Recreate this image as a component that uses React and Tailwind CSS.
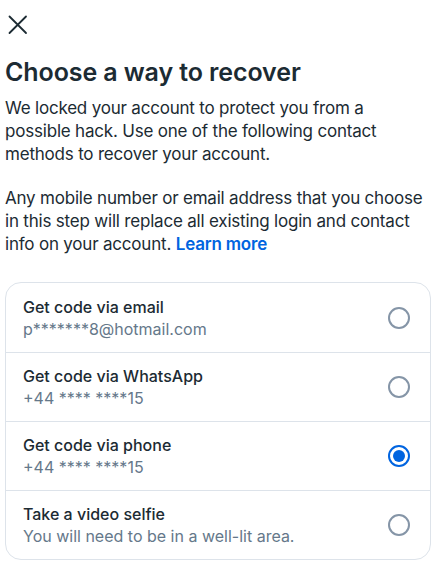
const options = [
  { title: 'Get code via email', sub: 'p*******8@hotmail.com', checked: false },
  { title: 'Get code via WhatsApp', sub: '+44 **** ****15', checked: false },
  { title: 'Get code via phone', sub: '+44 **** ****15', checked: true },
  { title: 'Take a video selfie', sub: 'You will need to be in a well-lit area.', checked: false },
]

const Radio = ({ checked }) => {
  if (checked) {
    return (
      <div className="w-[22px] h-[22px] rounded-full border-2 border-[#0064e0] flex items-center justify-center">
        <div className="w-[12px] h-[12px] rounded-full bg-[#0064e0]"></div>
      </div>
    )
  }
  return <div className="w-[22px] h-[22px] rounded-full border-2 border-[#8595a7]"></div>
}

export default function App() {
  return (
    <div className="w-[437px] h-[575px] bg-white text-[#1c2b33] font-['Inter',sans-serif] px-[5px]">
      <div className="pt-[15px] pl-[3px] h-[50px]">
        <svg width="20" height="20" viewBox="0 0 20 20" fill="none" stroke="#1c2b33" strokeWidth="1.8" strokeLinecap="round">
          <path d="M1.5 1.5 L18 18 M18 1.5 L1.5 18" />
        </svg>
      </div>
      <h1 className="text-[25px] font-semibold leading-[32px] mt-[6px] tracking-[-0.1px]">Choose a way to recover</h1>
      <p className="text-[17px] leading-[23px] mt-[9px] tracking-[-0.2px]">
        We locked your account to protect you from a possible hack. Use one of the following contact methods to recover your account.
      </p>
      <p className="text-[17px] leading-[23px] mt-[21px] tracking-[-0.2px]">
        Any mobile number or email address that you choose in this step will replace all existing login and contact info on your account.{' '}
        <span className="text-[#0064e0] font-semibold">Learn more</span>
      </p>
      <div className="mt-[26px] mr-[1px] border border-[#dde3ea] rounded-[16px]">
        {options.map((o, i) => (
          <div
            key={i}
            className={`flex items-center justify-between h-[69px] pl-[17px] pr-[20px] ${i > 0 ? 'border-t border-[#dde3ea]' : ''}`}
          >
            <div className="flex flex-col">
              <span className="text-[16px] leading-[22px] font-medium">{o.title}</span>
              <span className="text-[16px] leading-[22px] text-[#65788a]">{o.sub}</span>
            </div>
            <Radio checked={o.checked} />
          </div>
        ))}
      </div>
    </div>
  )
}
